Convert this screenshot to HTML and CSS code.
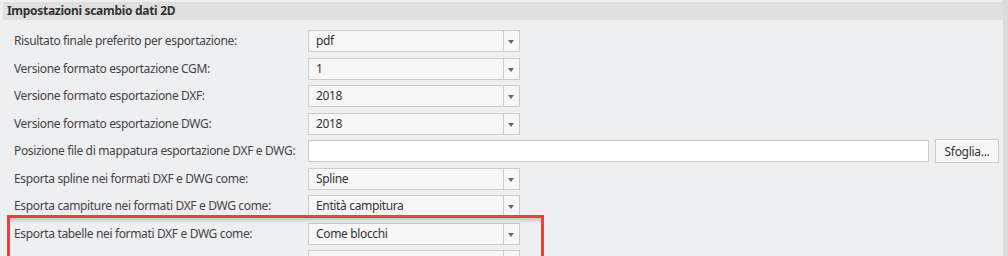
FILE: index.html
```html
<!DOCTYPE html>
<html lang="it">
<head>
    <meta charset="UTF-8">
    <title>Impostazioni scambio dati 2D</title>
    <link rel="stylesheet" href="styles.css">
</head>
<body>
    <div class="panel">
        <div class="content">
            <div class="section-title">Impostazioni scambio dati 2D</div>
            <div class="rows">
                <div class="row">
                    <label>Risultato finale preferito per esportazione:</label>
                    <div class="combo"><span class="value">pdf</span><span class="arrow"></span></div>
                </div>
                <div class="row">
                    <label>Versione formato esportazione CGM:</label>
                    <div class="combo"><span class="value">1</span><span class="arrow"></span></div>
                </div>
                <div class="row">
                    <label>Versione formato esportazione DXF:</label>
                    <div class="combo"><span class="value">2018</span><span class="arrow"></span></div>
                </div>
                <div class="row">
                    <label>Versione formato esportazione DWG:</label>
                    <div class="combo"><span class="value">2018</span><span class="arrow"></span></div>
                </div>
                <div class="row">
                    <label>Posizione file di mappatura esportazione DXF e DWG:</label>
                    <input class="path" type="text">
                    <button class="browse">Sfoglia...</button>
                </div>
                <div class="row">
                    <label>Esporta spline nei formati DXF e DWG come:</label>
                    <div class="combo"><span class="value">Spline</span><span class="arrow"></span></div>
                </div>
                <div class="row">
                    <label>Esporta campiture nei formati DXF e DWG come:</label>
                    <div class="combo"><span class="value">Entità campitura</span><span class="arrow"></span></div>
                </div>
                <div class="row">
                    <label>Esporta tabelle nei formati DXF e DWG come:</label>
                    <div class="combo"><span class="value">Come blocchi</span><span class="arrow"></span></div>
                </div>
                <div class="row">
                    <label></label>
                    <div class="combo"><span class="value"></span><span class="arrow"></span></div>
                </div>
            </div>
            <div class="highlight"></div>
        </div>
        <div class="scrollbar"></div>
    </div>
</body>
</html>
```

FILE: styles.css
```css
body {
    margin: 0;
    background: #eeeff1;
    font-family: "Noto Sans", "Open Sans", sans-serif;
    font-size: 12px;
    letter-spacing: -0.35px;
    color: #444;
    overflow: hidden;
}
.panel {
    display: flex;
    height: 256px;
}
.content {
    position: relative;
    flex: 1;
    padding-top: 2px;
}
.scrollbar {
    width: 5px;
    background: #dcdcdd;
}
.section-title {
    height: 18px;
    line-height: 18px;
    margin-left: 3px;
    padding-left: 4px;
    background: #dfdfdf;
    font-weight: bold;
    letter-spacing: -0.3px;
    color: #333;
}
.rows {
    padding-top: 10px;
}
.row {
    display: flex;
    align-items: flex-start;
    height: 22.5px;
    margin-bottom: 5px;
}
.row label {
    width: 294px;
    padding-left: 14px;
    line-height: 22px;
    white-space: nowrap;
}
.combo {
    display: flex;
    width: 210px;
    height: 20px;
    border: 1px solid #cbcbcb;
    background: #f7f7f7;
    color: #333;
}
.combo .value {
    flex: 1;
    padding-left: 7px;
    line-height: 20px;
}
.combo .arrow {
    width: 15px;
    border-left: 1px solid #cbcbcb;
    position: relative;
}
.combo .arrow::after {
    content: "";
    position: absolute;
    left: 4px;
    top: 9px;
    border-left: 3.5px solid transparent;
    border-right: 3.5px solid transparent;
    border-top: 4px solid #666;
}
.path {
    width: 619px;
    height: 20px;
    padding: 0;
    margin: 0;
    border: 1px solid #cbcbcb;
    background: #fff;
    box-sizing: content-box;
}
.browse {
    margin-left: 6px;
    margin-top: -1px;
    width: 64px;
    height: 24px;
    border: 1px solid #cbcbcb;
    background: #f7f7f7;
    font-family: inherit;
    font-size: 12px;
    letter-spacing: -0.3px;
    color: #333;
    padding: 0;
}
.highlight {
    position: absolute;
    left: 7px;
    top: 215px;
    width: 531px;
    height: 50px;
    border: 3px solid #e8413f;
    box-shadow: inset 0 5px 4px -3px rgba(0, 0, 0, 0.22);
}
```
